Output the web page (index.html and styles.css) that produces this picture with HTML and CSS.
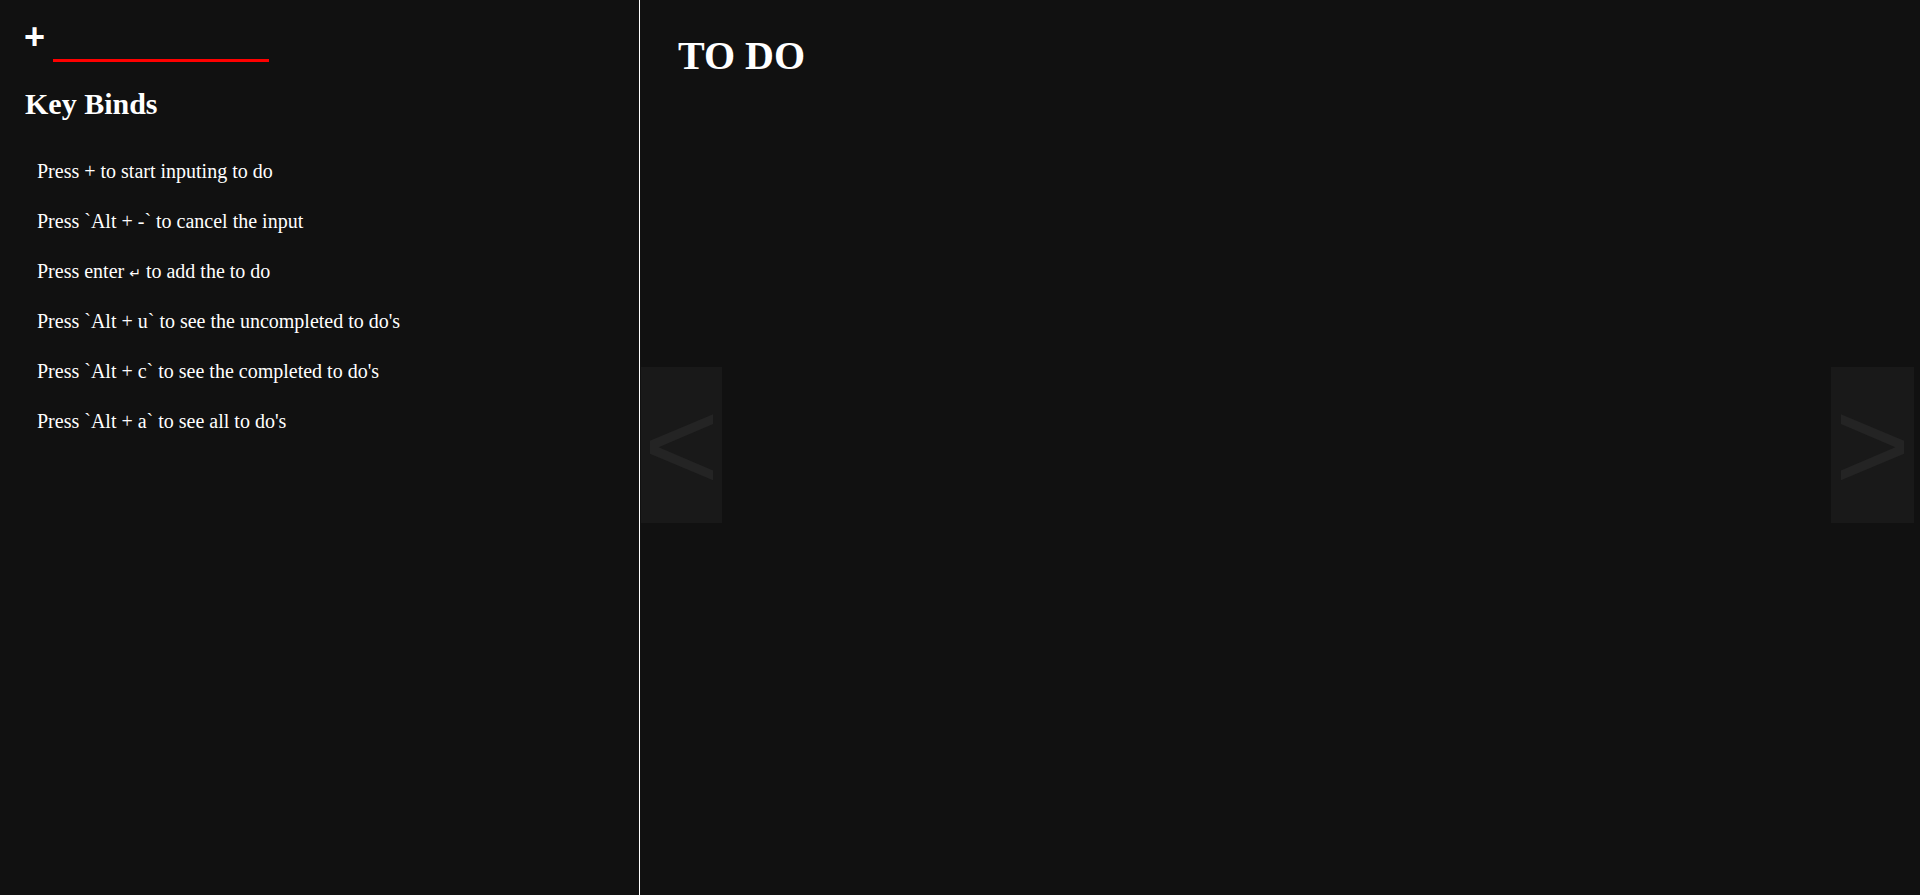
FILE: index.html
```html
<!DOCTYPE html>
<html lang="en">
<head>
<meta charset="utf-8">
<title>TO DO</title>
<link rel="stylesheet" href="styles.css">
</head>
<body>
<div class="app">
  <aside class="sidebar">
    <div class="add-row">
      <label class="add-label" for="todo-input">+</label>
      <input id="todo-input" class="todo-input" type="text">
    </div>
    <h2 class="binds-title">Key Binds</h2>
    <ul class="binds">
      <li>Press + to start inputing to do</li>
      <li>Press `Alt + -` to cancel the input</li>
      <li>Press enter <span class="enter-glyph">&#x21B5;</span> to add the to do</li>
      <li>Press `Alt + u` to see the uncompleted to do's</li>
      <li>Press `Alt + c` to see the completed to do's</li>
      <li>Press `Alt + a` to see all to do's</li>
    </ul>
  </aside>
  <main class="board">
    <h1 class="board-title">TO DO</h1>
    <button class="nav nav-prev" type="button">&lt;</button>
    <button class="nav nav-next" type="button">&gt;</button>
  </main>
</div>
</body>
</html>
```
FILE: styles.css
```css
html, body {
  margin: 0;
  height: 100%;
  background: #111111;
  color: #ffffff;
  font-family: "Liberation Serif", "Times New Roman", serif;
}

.app {
  display: flex;
  height: 895px;
}

.sidebar {
  width: 640px;
  flex: none;
  box-sizing: border-box;
  border-right: 1px solid #ffffff;
  padding-left: 25px;
}

.add-row {
  display: flex;
  align-items: flex-start;
  padding-top: 19px;
}

.add-label {
  margin-left: -1px;
  font: bold 36px/36px "Liberation Sans", Arial, sans-serif;
}

.todo-input {
  margin: 13px 0 0 8px;
  width: 216px;
  height: 30px;
  box-sizing: border-box;
  padding: 0;
  background: transparent;
  border: none;
  border-bottom: 3px solid #ff0000;
  outline: none;
  color: #ffffff;
}

.binds-title {
  margin: 25px 0 0;
  font-size: 30px;
  line-height: 34px;
  font-weight: bold;
}

.binds {
  list-style: none;
  margin: 25px 0 0;
  padding: 0 0 0 12px;
  font-size: 20px;
  line-height: 50px;
}

.binds li {
  height: 50px;
}

.enter-glyph {
  font-family: "DejaVu Sans", sans-serif;
  font-size: 14px;
  line-height: 1;
}

.board {
  flex: 1;
  position: relative;
  padding: 34px 0 0 38px;
}

.board-title {
  margin: 0;
  font-size: 40px;
  line-height: 44px;
  font-weight: bold;
}

.nav {
  position: absolute;
  top: 367px;
  width: 81px;
  height: 156px;
  padding: 0;
  border: none;
  background: #191919;
  color: #242424;
  font: 130px/1 "Liberation Sans", Arial, sans-serif;
  display: flex;
  align-items: center;
  justify-content: center;
}

.nav-prev {
  left: 1px;
}

.nav-next {
  right: 6px;
  width: 83px;
}
```
